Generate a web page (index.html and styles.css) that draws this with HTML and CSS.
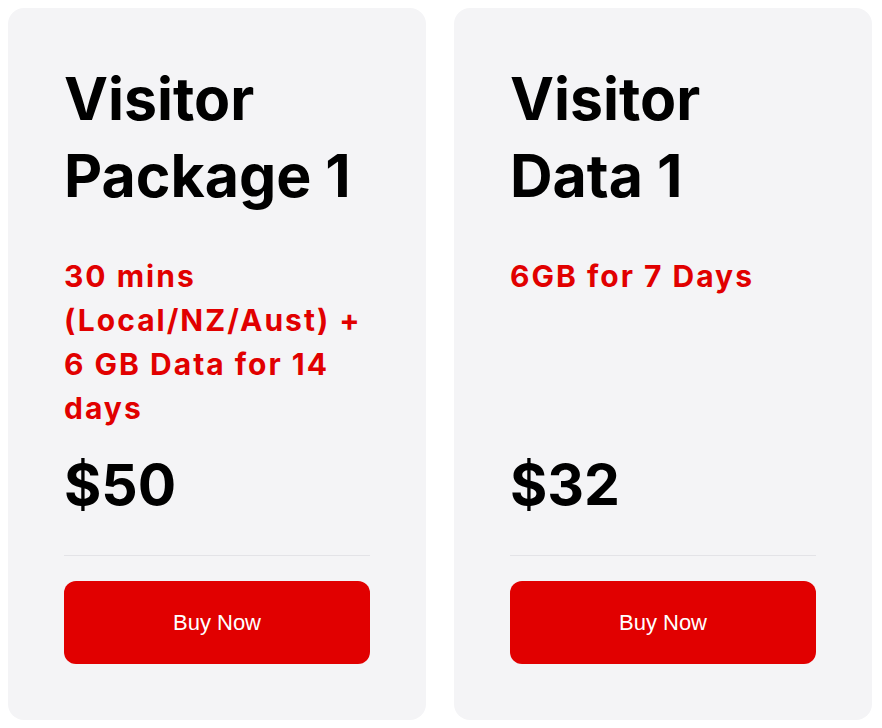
FILE: index.html
```html
<!DOCTYPE html>
<html lang="en">
<head>
<meta charset="utf-8">
<title>Visitor Packages</title>
<link rel="stylesheet" href="styles.css">
</head>
<body>
<div class="plans">
  <section class="card">
    <h2 class="title">Visitor Package 1</h2>
    <p class="desc">30 mins (Local/NZ/Aust) + 6 GB Data for 14 days</p>
    <div class="price">$50</div>
    <hr class="divider">
    <button class="buy">Buy Now</button>
  </section>
  <section class="card">
    <h2 class="title">Visitor Data 1</h2>
    <p class="desc">6GB for 7 Days</p>
    <div class="price">$32</div>
    <hr class="divider">
    <button class="buy">Buy Now</button>
  </section>
</div>
</body>
</html>
```
FILE: styles.css
```css
html, body {
  margin: 0;
  padding: 0;
  background: #ffffff;
}
body {
  padding: 8px;
  font-family: Inter, "Liberation Sans", Arial, sans-serif;
}
.plans {
  display: grid;
  grid-template-columns: 418px 418px;
  column-gap: 28px;
}
.card {
  background: #f4f4f6;
  border-radius: 16px;
  padding: 52px 56px 56px;
  display: flex;
  flex-direction: column;
  height: 712px;
  box-sizing: border-box;
}
.title {
  margin: 0 0 40px;
  font-size: 59px;
  line-height: 77px;
  font-weight: 700;
  color: #000;
}
.desc {
  margin: 0 0 22px;
  font-size: 30px;
  line-height: 44px;
  font-weight: 700;
  letter-spacing: 2px;
  color: #e10000;
  flex: 1 1 auto;
}
.price {
  font-weight: 700;
  font-size: 57px;
  line-height: 65px;
  color: #000;
}
.divider {
  margin: 38px 0 25px;
  border: 0;
  height: 1px;
  background: #e3e3e7;
}
.buy {
  height: 83px;
  border: 0;
  border-radius: 12px;
  background: #e10000;
  color: #fff;
  font-family: "Liberation Sans", Arial, sans-serif;
  font-size: 22px;
  cursor: pointer;
}
```
